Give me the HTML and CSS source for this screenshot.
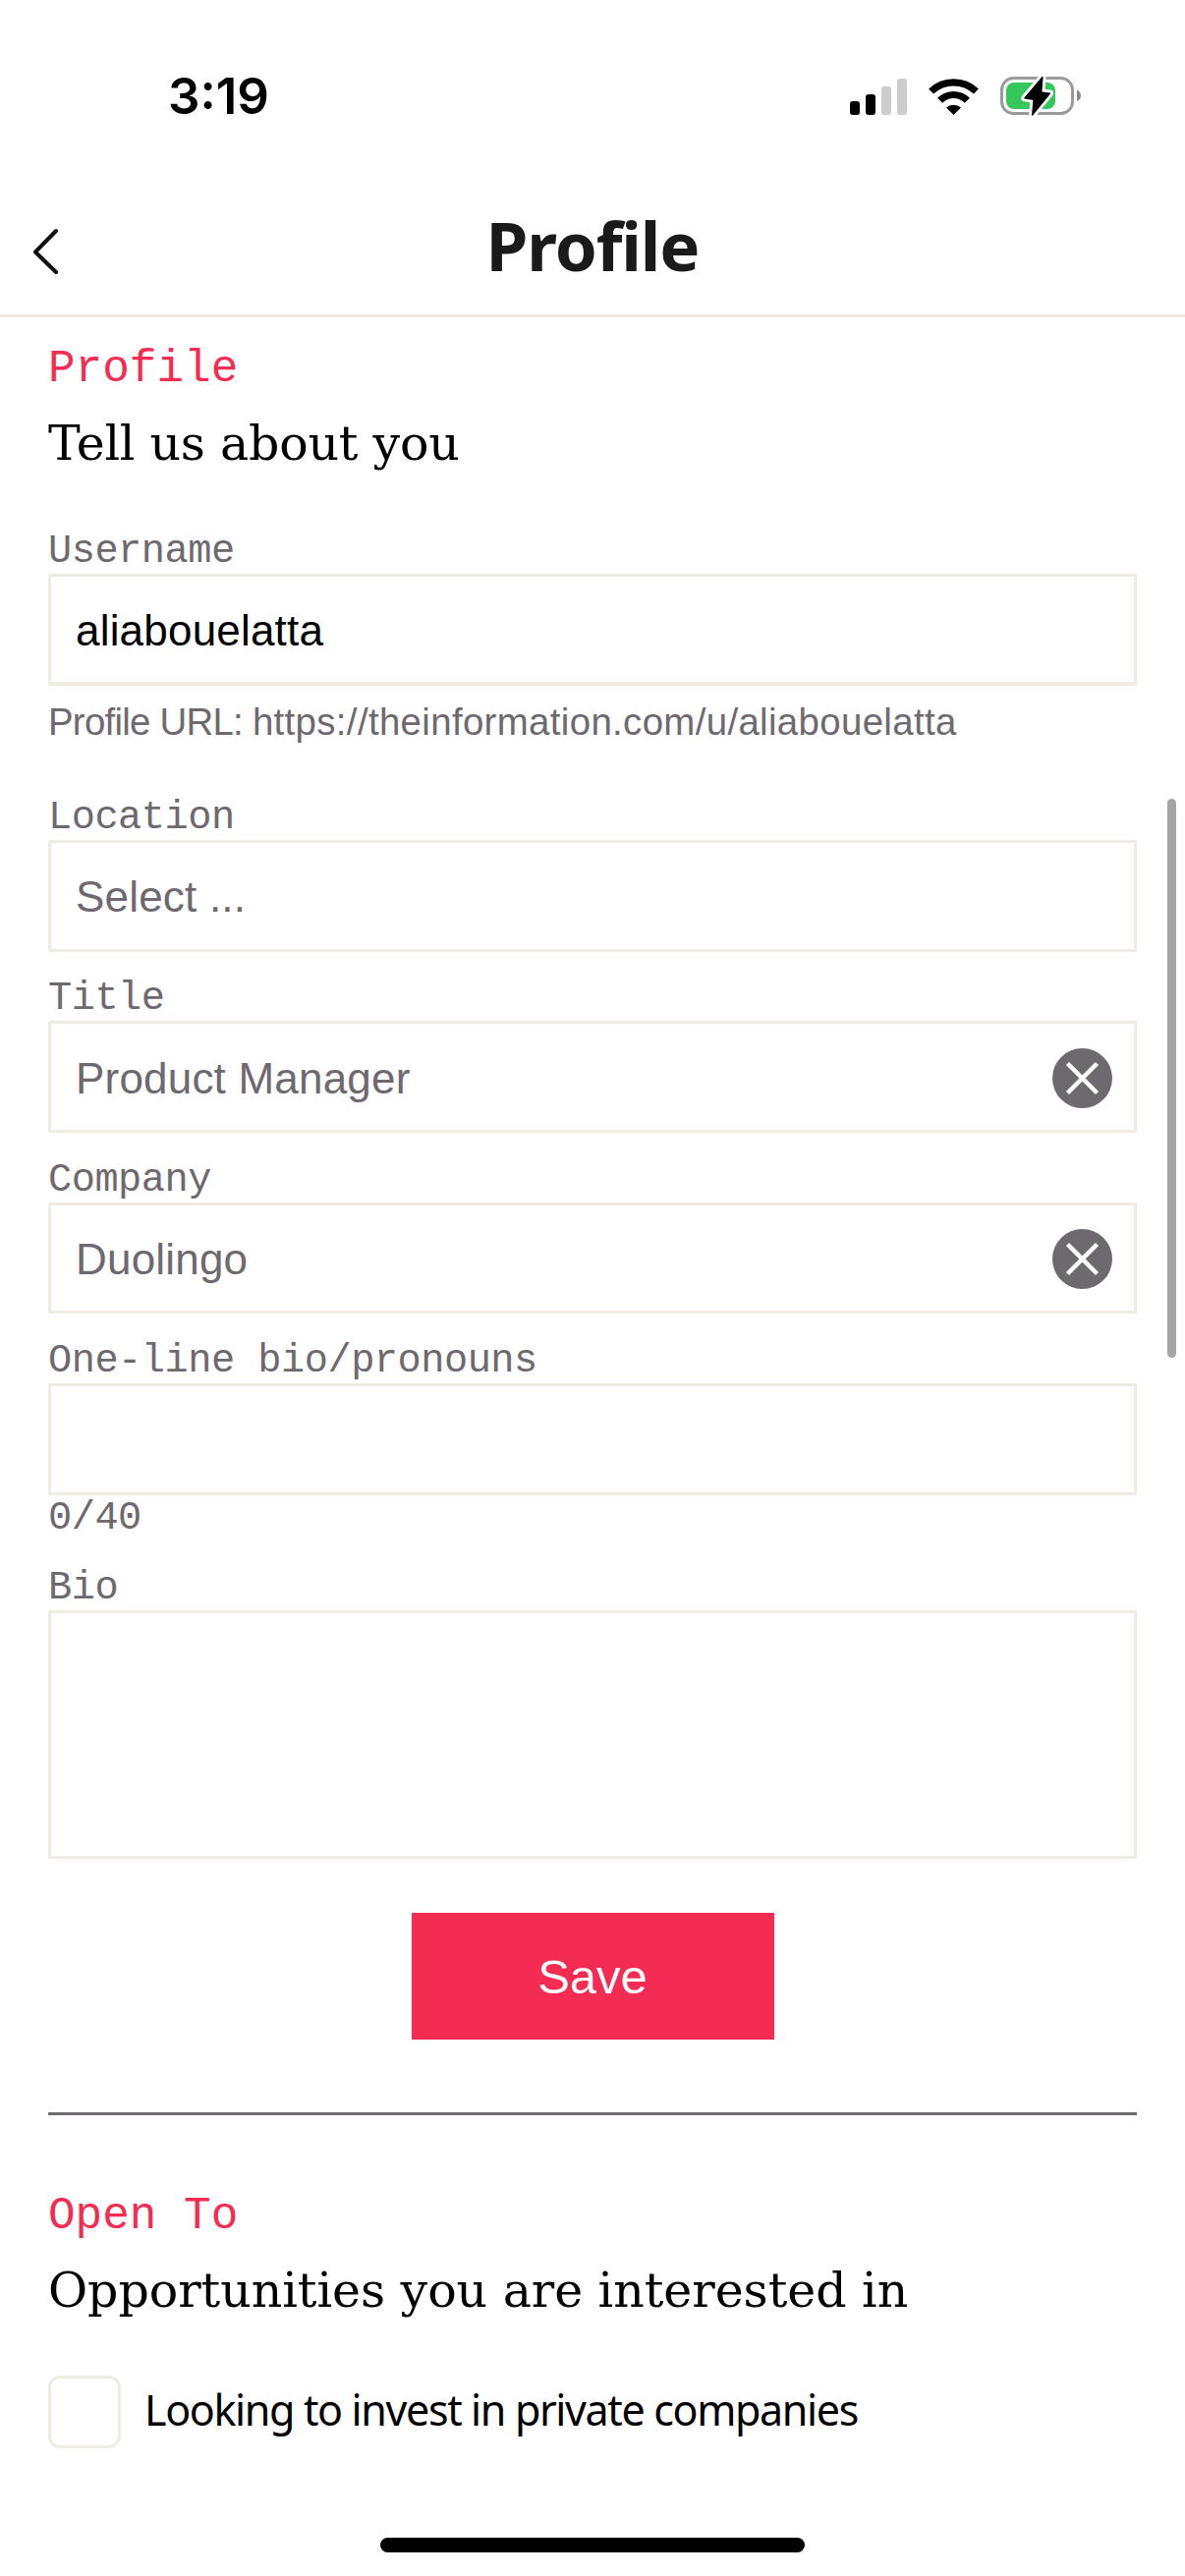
FILE: index.html
```html
<!DOCTYPE html>
<html lang="en">
<head>
<meta charset="utf-8">
<title>Profile</title>
<link rel="stylesheet" href="styles.css">
</head>
<body>
<div class="status-bar">
  <span class="time">3:19</span>
  <div class="status-icons">
    <svg class="signal" width="58" height="37" viewBox="0 0 58 37">
      <rect x="0" y="23" width="10" height="14" rx="3"/>
      <rect x="16" y="16" width="10" height="21" rx="3"/>
      <rect x="32" y="8" width="10" height="29" rx="3" fill="#ccc"/>
      <rect x="48" y="0" width="10" height="37" rx="3" fill="#ccc"/>
    </svg>
    <svg class="wifi" width="51" height="37" viewBox="0 0 51 37">
      <g fill="none" stroke="#000" stroke-width="7.2">
        <path d="M2.6 13A33.1 33.1 0 0 1 48.4 13"/>
        <path d="M11.6 22.3A19.5 19.5 0 0 1 39.4 22.3"/>
      </g>
      <path d="M25.5 37L18 29.6A11 11 0 0 1 33 29.6Z"/>
    </svg>
    <svg class="battery" width="83" height="42" viewBox="0 0 83 42">
      <rect x="1.5" y="2.5" width="72" height="36" rx="12" fill="none" stroke="#9b9b9b" stroke-width="3"/>
      <path d="M78 14.2Q82 16.5 82 20.5T78 26Z" fill="#8a8a8a"/>
      <rect x="6" y="7" width="50" height="27" rx="8" fill="#34c759"/>
      <path class="bolt-gap" d="M43 1.5L41.8 16.8L50.5 18L32.6 40L34 24.3L24.8 22.8Z"/>
      <path class="bolt" d="M43 1.5L41.8 16.8L50.5 18L32.6 40L34 24.3L24.8 22.8Z"/>
    </svg>
  </div>
</div>

<header class="nav">
  <svg class="back" width="30" height="52" viewBox="0 0 30 52"><path d="M26 5L5 26.5L26 47"/></svg>
  <h1>Profile</h1>
</header>

<main class="content">
  <p class="eyebrow">Profile</p>
  <h2 class="intro">Tell us about you</h2>

  <div class="form">
    <div class="field field-username">
      <span class="label">Username</span>
      <div class="box filled">aliabouelatta</div>
      <p class="helper"><span class="helper-lead">Profile URL: </span>https://theinformation.com/u/aliabouelatta</p>
    </div>
    <div class="field">
      <span class="label">Location</span>
      <div class="box">Select ...</div>
    </div>
    <div class="field">
      <span class="label">Title</span>
      <div class="box">Product Manager
        <svg class="clear" width="61" height="61" viewBox="0 0 61 61"><circle cx="30.5" cy="30.5" r="30.5"/><path d="M15.5 15.5L45.5 45.5M45.5 15.5L15.5 45.5"/></svg>
      </div>
    </div>
    <div class="field">
      <span class="label">Company</span>
      <div class="box">Duolingo
        <svg class="clear" width="61" height="61" viewBox="0 0 61 61"><circle cx="30.5" cy="30.5" r="30.5"/><path d="M15.5 15.5L45.5 45.5M45.5 15.5L15.5 45.5"/></svg>
      </div>
    </div>
    <div class="field">
      <span class="label">One-line bio/pronouns</span>
      <div class="box"></div>
      <span class="label counter">0/40</span>
    </div>
    <div class="field">
      <span class="label">Bio</span>
      <div class="box bio"></div>
    </div>
  </div>

  <div class="save">Save</div>

  <section class="open-to">
    <p class="eyebrow">Open To</p>
    <h2>Opportunities you are interested in</h2>
    <div class="option">
      <span class="checkbox"></span>
      <span class="option-text">Looking to invest in private companies</span>
    </div>
  </section>
</main>

<div class="scroll-thumb"></div>
<div class="home-indicator"></div>
</body>
</html>
```
FILE: styles.css
```css
* {
  box-sizing: border-box;
  margin: 0;
}

body {
  position: relative;
  height: 2622px;
  overflow: hidden;
  background: #fff;
  color: #000;
  font-family: "Liberation Sans", Arial, sans-serif;
}

svg {
  display: block;
  flex: none;
}

.status-bar {
  display: flex;
  align-items: center;
  justify-content: space-between;
  height: 178px;
  padding: 18px 105px 0 171px;
}

.time {
  font: 600 51px/60px Inter, sans-serif;
}

.status-icons {
  display: flex;
  align-items: center;
}

.wifi {
  margin: 0 22px;
}

.bolt-gap {
  fill: #fff;
  stroke: #fff;
  stroke-width: 7;
  stroke-linejoin: round;
}

.bolt {
  stroke: #000;
  stroke-width: 1.2;
  stroke-linejoin: round;
}

.nav {
  display: grid;
  grid-template-columns: 90px 1fr 90px;
  align-items: center;
  height: 145px;
  border-bottom: 3px solid #f0ece4;
}

.back {
  margin: 14px 0 0 31px;
  fill: none;
  stroke: #111;
  stroke-width: 4;
  stroke-linecap: round;
  stroke-linejoin: round;
}

h1 {
  color: #1a1a1a;
  font: 700 69px/90px "Noto Sans", sans-serif;
  letter-spacing: -1.1px;
  text-align: center;
}

.content {
  padding: 26px 49px 0;
}

.eyebrow {
  color: #f42b52;
  font: 46px/54px "Liberation Mono", monospace;
  padding-bottom: 2px;
}

h2 {
  margin-top: 12px;
  font: 400 49px/70px "DejaVu Serif", serif;
  letter-spacing: -0.06px;
  white-space: nowrap;
}

.intro {
  letter-spacing: -0.25px;
}

.form {
  display: flex;
  flex-direction: column;
  gap: 27.66px;
  margin-top: 54px;
}

.field {
  display: flex;
  flex-direction: column;
}

.field-username {
  margin-bottom: 19.67px;
}

.label {
  padding-bottom: 2px;
  color: #6e696f;
  font: 40.3px/41px "Liberation Mono", monospace;
  letter-spacing: -0.48px;
}

.box {
  display: flex;
  align-items: center;
  justify-content: space-between;
  height: 113.67px;
  padding: 3px 22px 0 25px;
  border: 3px solid #f0ece4;
  color: #6e696f;
  font-size: 44px;
  letter-spacing: 0.2px;
}

.filled {
  border-bottom-width: 4px;
  color: #000;
}

.helper {
  margin-top: 7px;
  color: #6e696f;
  font-size: 38.4px;
  line-height: 60px;
  letter-spacing: 0.35px;
}

.helper-lead {
  letter-spacing: -0.75px;
}

.clear {
  fill: #6e696f;
}

.clear path {
  stroke: #fff;
  stroke-width: 4.5;
}

.counter {
  margin-top: 3.33px;
}

.bio {
  height: 253.33px;
}

.save {
  width: 369px;
  margin: 55px auto 0;
  padding-top: 2px;
  background: #f42b52;
  color: #fff;
  font-size: 49px;
  line-height: 127px;
  text-align: center;
}

.open-to {
  margin-top: 74px;
  padding-top: 76px;
  border-top: 3px solid #6e696f;
}

.option {
  display: flex;
  align-items: center;
  gap: 24px;
  margin-top: 51px;
}

.checkbox {
  flex: none;
  width: 74px;
  height: 74px;
  border: 3px solid #f0ece4;
  border-radius: 12px;
}

.option-text {
  padding-bottom: 4px;
  font: 43px/60px "Noto Sans", sans-serif;
  letter-spacing: -1.36px;
  white-space: nowrap;
}

.scroll-thumb {
  position: absolute;
  top: 813px;
  right: 9px;
  width: 9px;
  height: 569px;
  border-radius: 5px;
  background: #a4a4a4;
}

.home-indicator {
  position: absolute;
  bottom: 24px;
  left: 387px;
  width: 432px;
  height: 15px;
  border-radius: 8px;
  background: #000;
}
```
